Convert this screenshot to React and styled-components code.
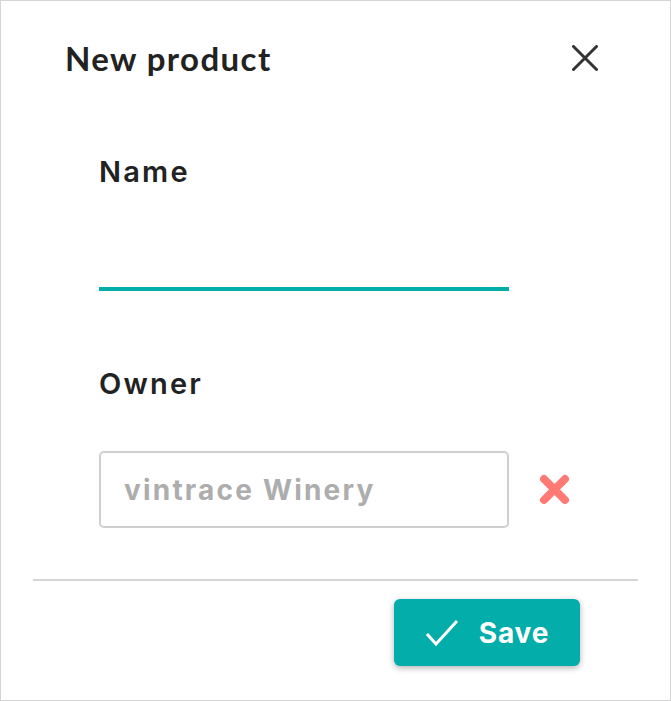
import React from "react";
import styled, { createGlobalStyle } from "styled-components";

const Global = createGlobalStyle`
  html, body { margin: 0; padding: 0; background: #fff; }
  body { font-family: Lato, "Open Sans", sans-serif; }
  * { box-sizing: border-box; }
`;

const Frame = styled.div`
  width: 671px;
  height: 701px;
  border: 1px solid #d4d4d4;
  background: #fff;
  display: flex;
  flex-direction: column;
`;

const Header = styled.div`
  display: flex;
  align-items: center;
  justify-content: space-between;
  padding: 36px 72px 4px 64px;
  height: 82px;
`;

const Title = styled.h1`
  margin: 0;
  font-family: Lato, sans-serif;
  font-weight: 700;
  font-size: 33px;
  letter-spacing: 1.4px;
  line-height: 40px;
  color: #222;
`;

const CloseButton = styled.button`
  border: 0;
  background: none;
  padding: 0;
  width: 26px;
  height: 26px;
  display: flex;
  cursor: pointer;
  color: #333;
`;

const Body = styled.div`
  padding: 0 0 0 98px;
  display: flex;
  flex-direction: column;
`;

const Label = styled.label`
  display: block;
  font-family: Inter, "Open Sans", sans-serif;
  font-weight: 600;
  font-size: 29px;
  letter-spacing: 2.2px;
  line-height: 34px;
  color: #222;
  margin-top: ${(p) => p.$top}px;
`;

const UnderlineInput = styled.input`
  display: block;
  width: 410px;
  height: 40px;
  margin-top: 62px;
  border: 0;
  border-bottom: 4px solid #00ada8;
  outline: none;
  font-family: Inter, sans-serif;
  font-size: 26px;
  background: transparent;
`;

const OwnerRow = styled.div`
  display: flex;
  align-items: center;
  gap: 30px;
  margin-top: 50px;
`;

const BoxInput = styled.input`
  width: 410px;
  height: 77px;
  border: 2px solid #cfcfcf;
  border-radius: 5px;
  padding: 0 23px;
  font-family: Inter, sans-serif;
  font-weight: 700;
  font-size: 28px;
  letter-spacing: 2.2px;
  color: #222;
  outline: none;
  &::placeholder { color: #adadad; }
`;

const ClearButton = styled.button`
  border: 0;
  background: none;
  padding: 0;
  width: 31px;
  height: 31px;
  display: flex;
  cursor: pointer;
`;

const Divider = styled.hr`
  margin: 51px 32px 0 32px;
  border: 0;
  border-top: 2px solid #d6d6d6;
`;

const Footer = styled.div`
  display: flex;
  justify-content: flex-end;
  padding: 18px 90px 0 0;
`;

const SaveButton = styled.button`
  width: 186px;
  height: 67px;
  border: 0;
  border-radius: 6px;
  background: #03ada9;
  color: #fff;
  display: flex;
  align-items: center;
  justify-content: center;
  gap: 20px;
  padding-right: 6px;
  font-family: Inter, sans-serif;
  font-weight: 700;
  font-size: 28px;
  letter-spacing: 0.8px;
  box-shadow: 0 2px 6px rgba(0, 0, 0, 0.3);
  cursor: pointer;
`;

export default function App() {
  return (
    <>
      <Global />
      <Frame>
        <Header>
          <Title>New product</Title>
          <CloseButton aria-label="Close">
            <svg width="26" height="26" viewBox="0 0 26 26">
              <path d="M1.5 1.5 L24.5 24.5 M24.5 1.5 L1.5 24.5" stroke="#333" strokeWidth="3" strokeLinecap="round" />
            </svg>
          </CloseButton>
        </Header>
        <Body>
          <Label $top={72}>Name</Label>
          <UnderlineInput />
          <Label $top={76}>Owner</Label>
          <OwnerRow>
            <BoxInput placeholder="vintrace Winery" />
            <ClearButton aria-label="Clear">
              <svg width="31" height="31" viewBox="0 0 31 31">
                <path d="M5 5 L26 26 M26 5 L5 26" stroke="#ff7a74" strokeWidth="8" strokeLinecap="round" />
              </svg>
            </ClearButton>
          </OwnerRow>
        </Body>
        <Divider />
        <Footer>
          <SaveButton>
            <svg width="34" height="28" viewBox="0 0 34 28">
              <path d="M2 15 L11 25 L32 2" stroke="#fff" strokeWidth="3" fill="none" />
            </svg>
            Save
          </SaveButton>
        </Footer>
      </Frame>
    </>
  );
}
